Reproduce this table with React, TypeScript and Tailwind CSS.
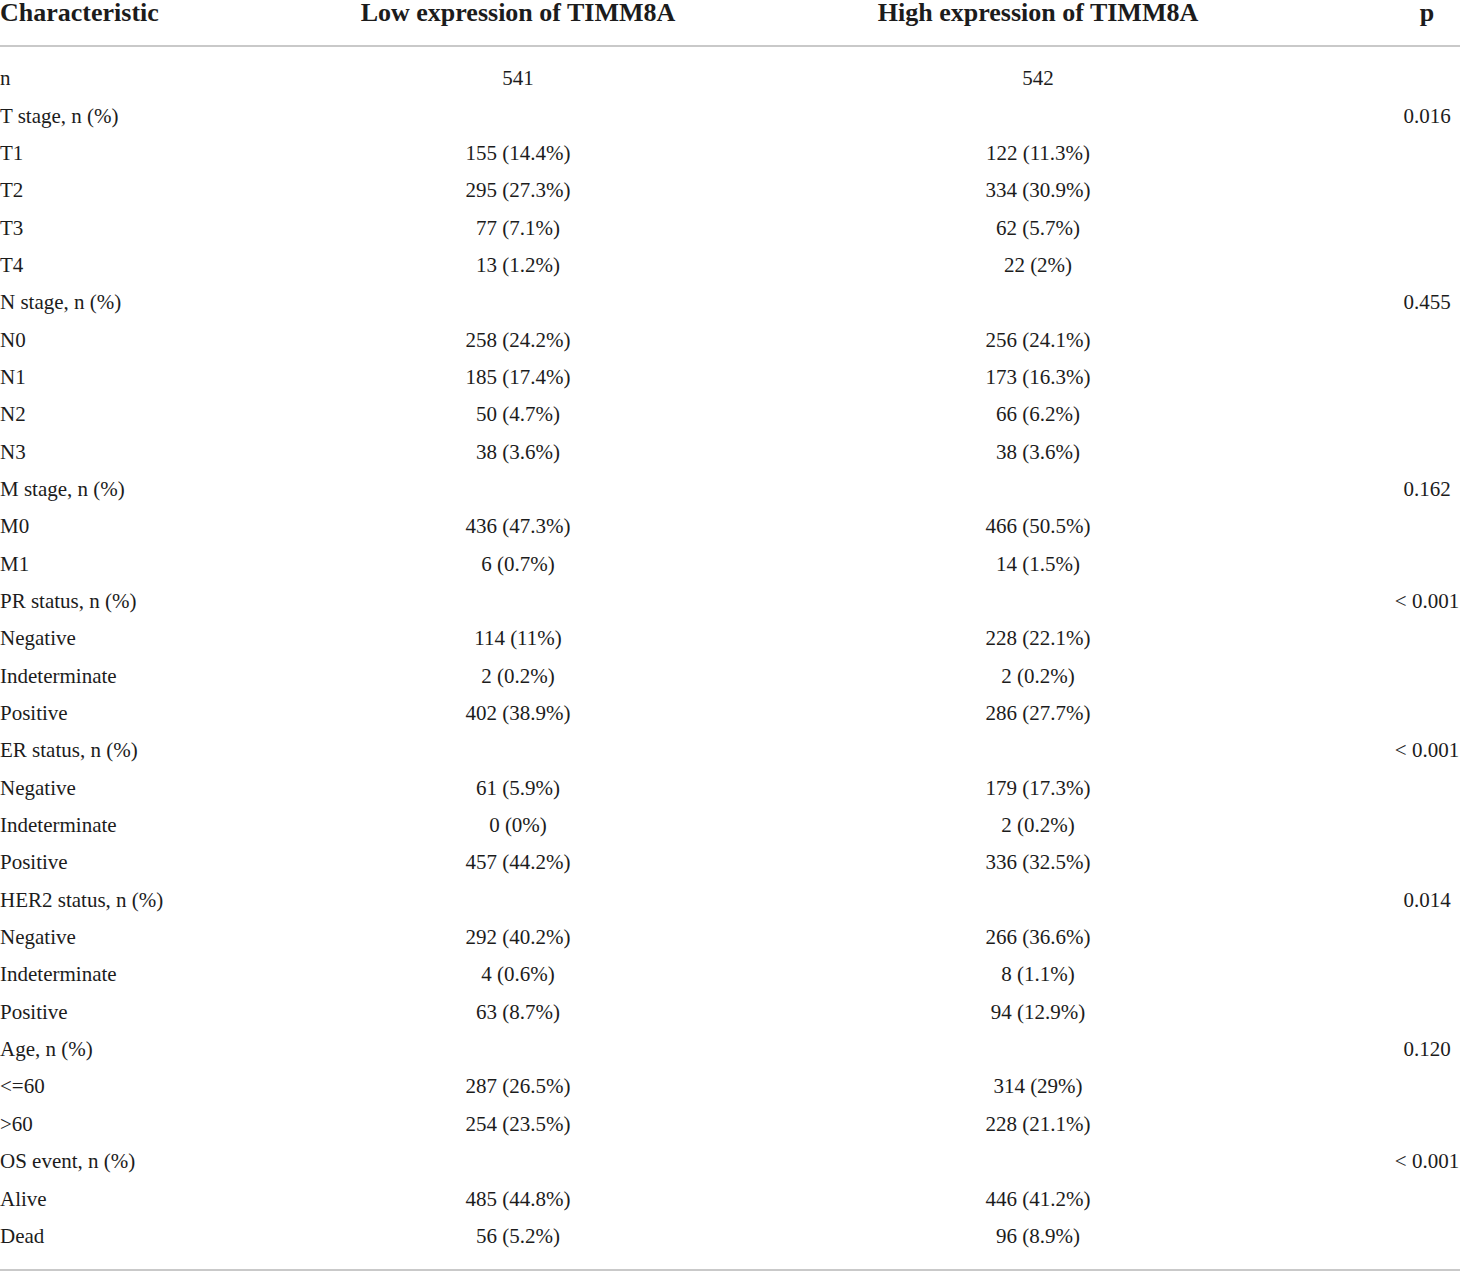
type Row = { label: string; low?: string; high?: string; p?: string };

const rows: Row[] = [
  { label: 'n', low: '541', high: '542' },
  { label: 'T stage, n (%)', p: '0.016' },
  { label: 'T1', low: '155 (14.4%)', high: '122 (11.3%)' },
  { label: 'T2', low: '295 (27.3%)', high: '334 (30.9%)' },
  { label: 'T3', low: '77 (7.1%)', high: '62 (5.7%)' },
  { label: 'T4', low: '13 (1.2%)', high: '22 (2%)' },
  { label: 'N stage, n (%)', p: '0.455' },
  { label: 'N0', low: '258 (24.2%)', high: '256 (24.1%)' },
  { label: 'N1', low: '185 (17.4%)', high: '173 (16.3%)' },
  { label: 'N2', low: '50 (4.7%)', high: '66 (6.2%)' },
  { label: 'N3', low: '38 (3.6%)', high: '38 (3.6%)' },
  { label: 'M stage, n (%)', p: '0.162' },
  { label: 'M0', low: '436 (47.3%)', high: '466 (50.5%)' },
  { label: 'M1', low: '6 (0.7%)', high: '14 (1.5%)' },
  { label: 'PR status, n (%)', p: '< 0.001' },
  { label: 'Negative', low: '114 (11%)', high: '228 (22.1%)' },
  { label: 'Indeterminate', low: '2 (0.2%)', high: '2 (0.2%)' },
  { label: 'Positive', low: '402 (38.9%)', high: '286 (27.7%)' },
  { label: 'ER status, n (%)', p: '< 0.001' },
  { label: 'Negative', low: '61 (5.9%)', high: '179 (17.3%)' },
  { label: 'Indeterminate', low: '0 (0%)', high: '2 (0.2%)' },
  { label: 'Positive', low: '457 (44.2%)', high: '336 (32.5%)' },
  { label: 'HER2 status, n (%)', p: '0.014' },
  { label: 'Negative', low: '292 (40.2%)', high: '266 (36.6%)' },
  { label: 'Indeterminate', low: '4 (0.6%)', high: '8 (1.1%)' },
  { label: 'Positive', low: '63 (8.7%)', high: '94 (12.9%)' },
  { label: 'Age, n (%)', p: '0.120' },
  { label: '<=60', low: '287 (26.5%)', high: '314 (29%)' },
  { label: '>60', low: '254 (23.5%)', high: '228 (21.1%)' },
  { label: 'OS event, n (%)', p: '< 0.001' },
  { label: 'Alive', low: '485 (44.8%)', high: '446 (41.2%)' },
  { label: 'Dead', low: '56 (5.2%)', high: '96 (8.9%)' },
];

export default function App() {
  return (
    <div className="w-[1460px] h-[1271px] bg-white text-[#1c1c1c] font-['Liberation_Serif','Times_New_Roman',serif]">
      {/* header */}
      <div className="grid grid-cols-[354px_328px_712px_66px] h-[45px] text-[26px] leading-[26px] font-bold">
        <div className="whitespace-nowrap">Characteristic</div>
        <div className="text-center whitespace-nowrap">Low expression of TIMM8A</div>
        <div className="text-center whitespace-nowrap">High expression of TIMM8A</div>
        <div className="text-center">p</div>
      </div>
      <div className="h-[2px] bg-[#c9c9c9]" />

      {/* body */}
      <div className="pt-[13.2px] pb-[13.5px] text-[21px]">
        {rows.map((r, i) => (
          <div key={i} className="grid grid-cols-[354px_328px_712px_66px] h-[37.35px] leading-[37.35px]">
            <div className="whitespace-nowrap">{r.label}</div>
            <div className="text-center whitespace-nowrap">{r.low}</div>
            <div className="text-center whitespace-nowrap">{r.high}</div>
            <div className="text-center whitespace-nowrap">{r.p}</div>
          </div>
        ))}
      </div>
      <div className="h-[2px] bg-[#c9c9c9]" />
    </div>
  );
}
